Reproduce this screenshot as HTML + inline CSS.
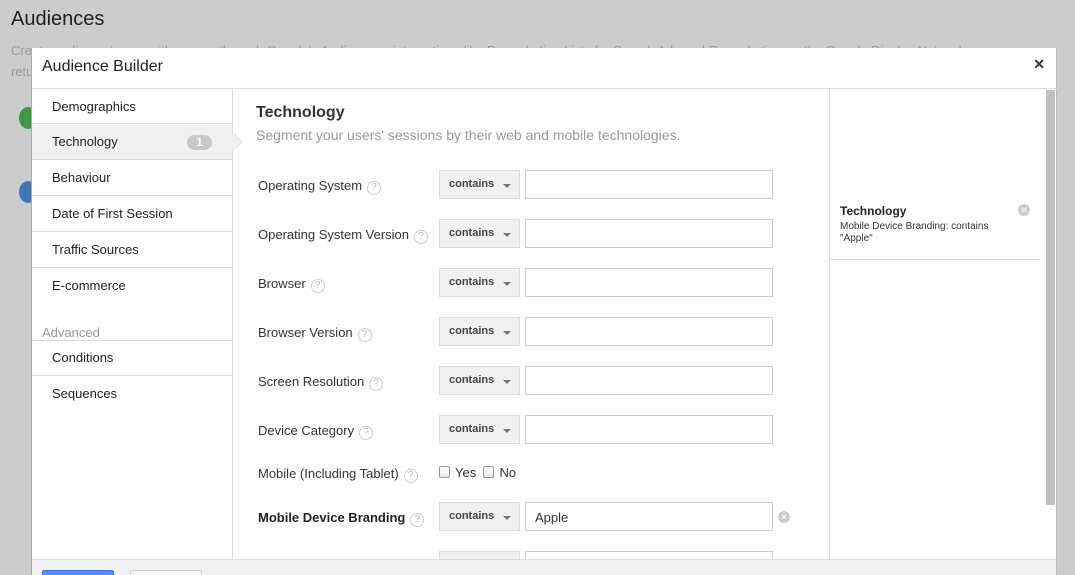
<!DOCTYPE html>
<html><head><style>
*{box-sizing:border-box;margin:0;padding:0}
html,body{width:1075px;height:575px;overflow:hidden}
body{background:#ccc;font-family:"Liberation Sans",sans-serif;position:relative;color:#222}
.abs{position:absolute}
.nav div.it{position:absolute;left:0;width:200px;height:36px;border-bottom:1px solid #ddd;font-size:13px;padding:10px 0 0 20px;color:#222}
.lbl{position:absolute;left:258px;font-size:13px;color:#333}
.q{display:inline-block;width:14px;height:14px;border:1px solid #ccc;border-radius:50%;font-size:10px;color:#bbb;text-align:center;line-height:12px;margin-left:5px;vertical-align:0}
.dd{position:absolute;left:439px;width:81px;height:29px;background:#f1f1f1;border:1px solid #ddd;font-size:11px;font-weight:bold;color:#444;padding:7px 0 0 9px}
.dd:after{content:"";position:absolute;left:63px;top:13px;border:4px solid transparent;border-top-color:#777;border-bottom:0}
.in{position:absolute;left:525px;width:248px;height:29px;border:1px solid #ccc;background:#fff;font-size:13px;padding:7px 0 0 9px}
.cb{display:inline-block;width:11px;height:12px;border:1px solid #999;border-radius:2px;background:linear-gradient(#fff,#e8e8e8);vertical-align:-1px;margin-right:5px}
</style></head><body>
<div class="abs" style="left:11px;top:8px;font-size:20px;color:#222">Audiences</div>
<div class="abs" style="left:11px;top:43px;font-size:13px;color:#999;white-space:nowrap">Create audience to use with your ... through Google's Audience ... integrations like Remarketing Lists for Search Ads and Remarketing on the Google Display Network or</div>
<div class="abs" style="left:11px;top:64px;font-size:13px;color:#999">retu</div>
<div class="abs" style="left:19px;top:107px;width:18px;height:22px;border-radius:50%;background:#3a9a3f"></div>
<div class="abs" style="left:19px;top:181px;width:18px;height:22px;border-radius:50%;background:#3b78b5"></div>

<div class="abs" style="left:31px;top:48px;width:1026px;height:527px;background:#fff;border-left:1px solid #aaa;border-right:1px solid #bbb">
 <div class="abs" style="left:10px;top:10px;font-size:16px;color:#222">Audience Builder</div>
 <div class="abs" style="right:11px;top:8px;font-size:14px;font-weight:bold;color:#333">✕</div>
 <div class="abs" style="left:0;top:40px;width:1025px;border-top:1px solid #ddd"></div>
</div>
<div class="nav abs" style="left:32px;top:89px;width:201px;height:470px;border-right:1px solid #ddd">
 <div class="it" style="top:0;height:35px">Demographics</div>
 <div class="it" style="top:35px;background:#f1f1f1">Technology<span class="abs" style="left:155px;top:11px;width:25px;height:15px;border-radius:8px;background:#c8c8c8;color:#fff;font-size:12px;font-weight:bold;text-align:center;line-height:15px">1</span></div>
 <div class="it" style="top:71px">Behaviour</div>
 <div class="it" style="top:107px">Date of First Session</div>
 <div class="it" style="top:143px">Traffic Sources</div>
 <div class="it" style="top:179px;border-bottom:0">E-commerce</div>
 <div class="abs" style="left:10px;top:236px;font-size:13px;color:#999">Advanced</div>
 <div class="it" style="top:251px;border-top:1px solid #ddd;height:36px;padding-top:9px">Conditions</div>
 <div class="it" style="top:287px;border-bottom:0">Sequences</div>
</div>
<div class="abs" style="left:228px;top:136px;width:12px;height:12px;background:#f1f1f1;border-top:1px solid #ddd;border-right:1px solid #ddd;transform:rotate(45deg)"></div>

<div class="abs" style="left:256px;top:104px;font-size:16px;font-weight:bold;color:#333">Technology</div>
<div class="abs" style="left:256px;top:127px;font-size:14px;color:#999">Segment your users' sessions by their web and mobile technologies.</div>

<div class="lbl" style="top:178px">Operating System<span class="q">?</span></div>
<div class="dd" style="top:170px">contains</div><div class="in" style="top:170px"></div>
<div class="lbl" style="top:227px">Operating System Version<span class="q">?</span></div>
<div class="dd" style="top:219px">contains</div><div class="in" style="top:219px"></div>
<div class="lbl" style="top:276px">Browser<span class="q">?</span></div>
<div class="dd" style="top:268px">contains</div><div class="in" style="top:268px"></div>
<div class="lbl" style="top:325px">Browser Version<span class="q">?</span></div>
<div class="dd" style="top:317px">contains</div><div class="in" style="top:317px"></div>
<div class="lbl" style="top:374px">Screen Resolution<span class="q">?</span></div>
<div class="dd" style="top:366px">contains</div><div class="in" style="top:366px"></div>
<div class="lbl" style="top:423px">Device Category<span class="q">?</span></div>
<div class="dd" style="top:415px">contains</div><div class="in" style="top:415px"></div>
<div class="lbl" style="top:466px">Mobile (Including Tablet)<span class="q">?</span></div>
<div class="abs" style="left:439px;top:465px;font-size:13px;color:#333"><span class="cb"></span>Yes &nbsp;<span class="cb"></span>No</div>
<div class="lbl" style="top:510px;font-weight:bold;color:#222">Mobile Device Branding<span class="q" style="font-weight:normal">?</span></div>
<div class="dd" style="top:502px">contains</div><div class="in" style="top:502px;color:#333">Apple</div>
<div class="abs" style="left:778px;top:511px;width:12px;height:12px;border-radius:50%;background:#ccc;color:#fff;font-size:9px;text-align:center;line-height:12px">✕</div>
<div class="abs" style="left:439px;top:551px;width:81px;height:8px;background:#f1f1f1;border:1px solid #ddd;border-bottom:0"></div>
<div class="abs" style="left:525px;top:551px;width:248px;height:8px;border:1px solid #ccc;border-bottom:0"></div>

<div class="abs" style="left:829px;top:89px;width:1px;height:470px;background:#ddd"></div>
<div class="abs" style="left:1046px;top:90px;width:9px;height:415px;background:#c1c1c1"></div>
<div class="abs" style="left:840px;top:204px;font-size:12px;font-weight:bold;color:#222">Technology</div>
<div class="abs" style="left:840px;top:221px;font-size:10px;color:#333;line-height:12px">Mobile Device Branding: contains<br>"Apple"</div>
<div class="abs" style="left:1018px;top:204px;width:12px;height:12px;border-radius:50%;background:#ccc;color:#fff;font-size:9px;text-align:center;line-height:12px">✕</div>
<div class="abs" style="left:830px;top:259px;width:210px;height:1px;background:#ddd"></div>

<div class="abs" style="left:32px;top:559px;width:1024px;height:16px;background:#f1f1f1;border-top:1px solid #ddd"></div>
<div class="abs" style="left:42px;top:570px;width:72px;height:5px;background:#4d90fe;border:1px solid #3079ed;border-bottom:0;border-radius:2px 2px 0 0"></div>
<div class="abs" style="left:130px;top:570px;width:72px;height:5px;background:#f8f8f8;border:1px solid #ccc;border-bottom:0;border-radius:2px 2px 0 0"></div>
</body></html>
